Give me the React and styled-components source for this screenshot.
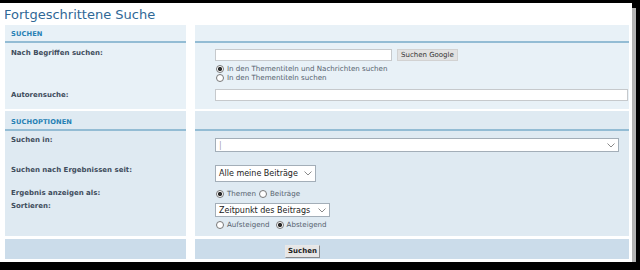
import React from "react";
import styled, { createGlobalStyle } from "styled-components";

const GlobalStyle = createGlobalStyle`
  html, body {
    margin: 0;
    padding: 0;
    background: #000;
  }
  body {
    font-family: "DejaVu Sans", Verdana, sans-serif;
  }
`;

const Panel = styled.div`
  margin-top: 3px;
  width: 624px;
  padding: 0 3px 3px 5px;
  background: #fff;
  box-shadow: 4px 5px 0 #b3b3b3;
`;

const Row = styled.div`
  display: grid;
  grid-template-columns: 181px 434px;
  column-gap: 9px;
  margin-top: ${({ $gap }) => $gap || 0}px;
`;

const Cell = styled.div`
  box-sizing: border-box;
  background: ${({ $bg }) => $bg || "#fff"};
  height: ${({ $h }) => $h}px;
  padding-top: ${({ $pt }) => $pt || 0}px;
  padding-left: ${({ $pl }) => $pl ?? 20}px;
`;

const TitleCell = styled.div`
  height: 22px;
  display: flex;
  align-items: center;
  overflow: hidden;
  background: #fff;
`;

const Title = styled.h1`
  margin: 0 0 0 -1px;
  font-size: 13px;
  font-weight: normal;
  color: #2f6896;
  white-space: nowrap;
`;

const HeadCell = styled.div`
  box-sizing: border-box;
  height: ${({ $h }) => $h}px;
  background: ${({ $bg }) => $bg};
  border-bottom: 2px solid #93bcd4;
  display: flex;
  align-items: flex-end;
  padding: 0 0 3px 6px;
  font-size: 6.7px;
  line-height: 1;
  font-weight: bold;
  color: #2580b4;
  letter-spacing: 0.1px;
`;

const Label = styled.div`
  box-sizing: border-box;
  height: ${({ $h }) => $h}px;
  background: ${({ $bg }) => $bg};
  padding: ${({ $pt }) => $pt}px 0 0 6px;
  font-size: 7px;
  line-height: 9px;
  font-weight: bold;
  color: #3e4c5c;
  white-space: nowrap;
`;

const Line = styled.div`
  display: flex;
  align-items: center;
  gap: ${({ $gap }) => $gap ?? 5}px;
`;

const TextInput = styled.input`
  display: block;
  box-sizing: border-box;
  width: ${({ $w }) => $w}px;
  height: 12px;
  margin: 0;
  padding: 0 2px;
  border: 1px solid #c6c9cc;
  background: #fff;
  outline: none;
`;

const SmallButton = styled.button`
  box-sizing: border-box;
  height: 12px;
  margin: 0;
  padding: 0 3px;
  font-family: inherit;
  font-size: 7px;
  line-height: 10px;
  color: #333;
  background: #e2e2e2;
  border: 1px solid #d2d2d2;
`;

const SubmitButton = styled.button`
  display: block;
  box-sizing: border-box;
  height: 13px;
  margin: 0;
  padding: 0 2px;
  font-family: inherit;
  font-size: 7px;
  font-weight: bold;
  line-height: 11px;
  color: #222;
  background: #e6e6e6;
  border: 1px solid;
  border-color: #e8e8e8 #8a8a8a #8a8a8a #e8e8e8;
`;

const Options = styled.div`
  margin-top: ${({ $mt }) => $mt || 0}px;
`;

const Option = styled.label`
  display: flex;
  align-items: center;
  height: 9px;
  font-size: 7.1px;
  color: #56626e;
  white-space: nowrap;
  margin-right: ${({ $mr }) => $mr || 0}px;
`;

const Radio = styled.span`
  box-sizing: border-box;
  flex: none;
  width: 8px;
  height: 8px;
  margin: 0 3px 0 1px;
  border-radius: 50%;
  border: 1px solid #777;
  background: ${({ $checked }) =>
    $checked ? "radial-gradient(circle, #2b2b2b 0 1.8px, #fff 2.4px)" : "#fff"};
`;

const SelectBox = styled.div`
  box-sizing: border-box;
  display: flex;
  align-items: center;
  justify-content: space-between;
  width: ${({ $w }) => $w}px;
  height: ${({ $h }) => $h}px;
  padding: 0 3px 0 3px;
  border: 1px solid #a3aeb8;
  background: #fff;
  font-size: 8px;
  color: #222;
  white-space: nowrap;
`;

const Caret = styled.span`
  font-size: 8px;
  color: #555;
  font-weight: 300;
`;

const Chevron = () => (
  <svg width="8" height="5" viewBox="0 0 8 5">
    <polyline points="0.5,0.5 4,4 7.5,0.5" fill="none" stroke="#8a8a8a" strokeWidth="1" />
  </svg>
);

const Select = ({ w, h, children }) => (
  <SelectBox $w={w} $h={h}>
    <span>{children}</span>
    <Chevron />
  </SelectBox>
);

const S1 = "#e8f1f7";
const S2 = "#dfeaf2";
const FOOT = "#cbdcea";

export default function App() {
  return (
    <>
      <GlobalStyle />
      <Panel>
        <Row>
          <TitleCell>
            <Title>Fortgeschrittene Suche</Title>
          </TitleCell>
          <TitleCell />
        </Row>

        <Row>
          <HeadCell $h={18} $bg={S1}>SUCHEN</HeadCell>
          <HeadCell $h={18} $bg={S1} />
        </Row>
        <Row>
          <Label $h={43} $pt={6} $bg={S1}>Nach Begriffen suchen:</Label>
          <Cell $h={43} $pt={6} $bg={S1}>
            <Line>
              <TextInput $w={177} />
              <SmallButton>Suchen Google</SmallButton>
            </Line>
            <Options $mt={3}>
              <Option>
                <Radio $checked />
                In den Thementiteln und Nachrichten suchen
              </Option>
              <Option>
                <Radio />
                In den Thementiteln suchen
              </Option>
            </Options>
          </Cell>
        </Row>
        <Row>
          <Label $h={23} $pt={5} $bg={S1}>Autorensuche:</Label>
          <Cell $h={23} $pt={3} $bg={S1}>
            <TextInput $w={413} />
          </Cell>
        </Row>

        <Row $gap={2}>
          <HeadCell $h={20} $bg={S2}>SUCHOPTIONEN</HeadCell>
          <HeadCell $h={20} $bg={S2} />
        </Row>
        <Row>
          <Label $h={29} $pt={5} $bg={S2}>Suchen in:</Label>
          <Cell $h={29} $pt={7} $bg={S2}>
            <Select w={404} h={14}>
              <Caret>|</Caret>
            </Select>
          </Cell>
        </Row>
        <Row>
          <Label $h={26} $pt={6} $bg={S2}>Suchen nach Ergebnissen seit:</Label>
          <Cell $h={26} $pt={5} $bg={S2}>
            <Select w={101} h={17}>Alle meine Beiträge</Select>
          </Cell>
        </Row>
        <Row>
          <Label $h={13} $pt={3} $bg={S2}>Ergebnis anzeigen als:</Label>
          <Cell $h={13} $pt={3} $bg={S2}>
            <Line $gap={0}>
              <Option $mr={2}>
                <Radio $checked />
                Themen
              </Option>
              <Option>
                <Radio />
                Beiträge
              </Option>
            </Line>
          </Cell>
        </Row>
        <Row>
          <Label $h={37} $pt={3} $bg={S2}>Sortieren:</Label>
          <Cell $h={37} $pt={4} $bg={S2}>
            <Select w={115} h={14}>Zeitpunkt des Beitrags</Select>
            <Options $mt={3}>
              <Line $gap={0}>
                <Option $mr={5}>
                  <Radio />
                  Aufsteigend
                </Option>
                <Option>
                  <Radio $checked />
                  Absteigend
                </Option>
              </Line>
            </Options>
          </Cell>
        </Row>

        <Row $gap={3}>
          <Cell $h={20} $bg={FOOT} />
          <Cell $h={20} $pt={6} $pl={90} $bg={FOOT}>
            <SubmitButton>Suchen</SubmitButton>
          </Cell>
        </Row>
      </Panel>
    </>
  );
}
